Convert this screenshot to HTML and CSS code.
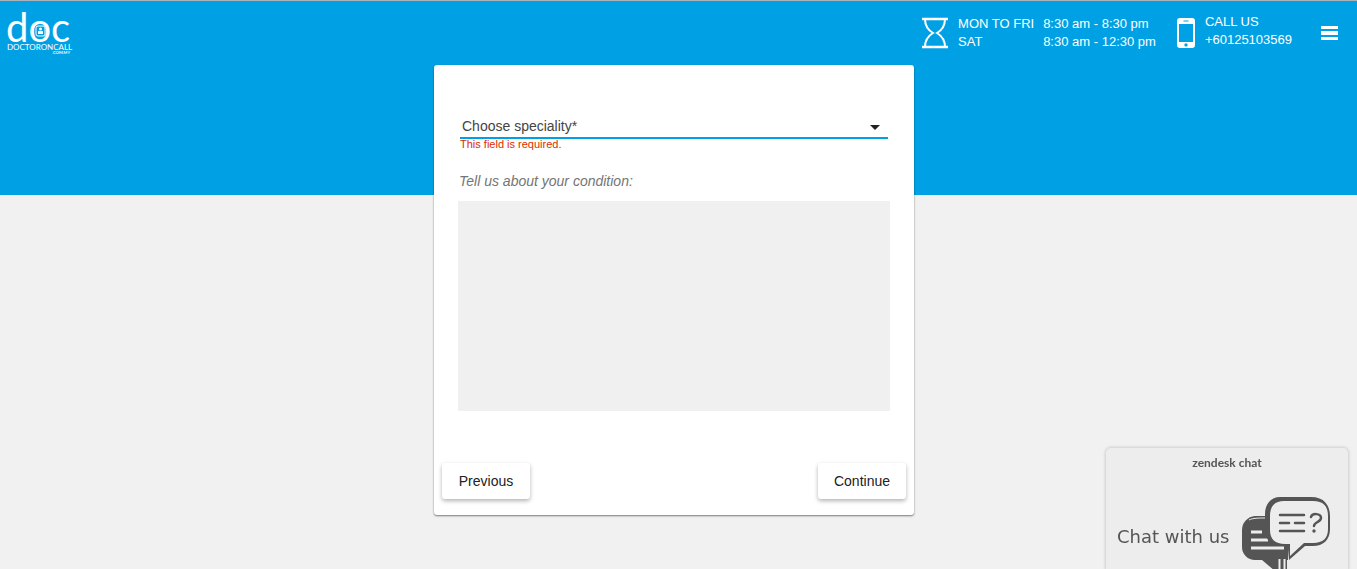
FILE: index.html
```html
<!DOCTYPE html>
<html lang="en">
<head>
    <meta charset="UTF-8">
    <meta name="viewport" content="width=device-width, initial-scale=1.0">
    <title>DoctorOnCall</title>
    <link rel="stylesheet" href="styles.css">
</head>
<body>
    <header class="header">
        <a class="logo" href="#" aria-label="DoctorOnCall home">
            <svg width="72" height="48" viewBox="0 0 72 48" fill="#fff">
                <text class="logo-doc" x="0" y="33">doc</text>
                <rect x="30" y="17" width="9" height="10" rx="2" fill="none" stroke="#fff" stroke-width="1"/>
                <circle cx="34.500" cy="20" r="1.500"/>
                <path d="M32 22h5v3h-5z"/>
                <text class="logo-name" x="1" y="41">DOCTORONCALL</text>
                <text class="logo-domain" x="64" y="45" text-anchor="end">.COM.MY</text>
            </svg>
        </a>
        <div class="header-info">
            <div class="hours">
                <svg width="28" height="32" viewBox="0 0 28 32" fill="none" stroke="#fff" stroke-width="2">
                    <path d="M1 2h26M1 30h26" stroke-width="2.500"/>
                    <path d="M4 2c0 7 3 11 8 14-5 3-8 7-8 14M24 2c0 7-3 11-8 14 5 3 8 7 8 14"/>
                </svg>
                <dl class="hours-list">
                    <dt>MON TO FRI</dt>
                    <dd>8:30 am - 8:30 pm</dd>
                    <dt>SAT</dt>
                    <dd>8:30 am - 12:30 pm</dd>
                </dl>
            </div>
            <div class="call">
                <svg width="18" height="30" viewBox="0 0 18 30">
                    <path fill="#fff" fill-rule="evenodd" d="M3 0h12a3 3 0 0 1 3 3v24a3 3 0 0 1-3 3H3a3 3 0 0 1-3-3V3a3 3 0 0 1 3-3zM2 6v18h14V6zM6.500 2.500v1h5v-1zM9 25.200a1.700 1.700 0 1 0 0 3.400 1.700 1.700 0 0 0 0-3.400z"/>
                </svg>
                <p class="call-text">CALL US<br><a href="tel:+60125103569">+60125103569</a></p>
            </div>
            <button class="menu-btn" type="button" aria-label="Menu">
                <svg width="17" height="14" viewBox="0 0 17 14" fill="#fff">
                    <path d="M0 0h17v3H0zM0 5h17v4H0zM0 11h17v3H0z"/>
                </svg>
            </button>
        </div>
    </header>

    <main class="main">
        <form class="card" action="#" method="post">
            <div class="fields">
                <div class="select-wrap">
                    <select class="speciality" id="speciality" name="speciality" aria-label="Choose speciality" aria-describedby="speciality-error">
                        <option value="">Choose speciality*</option>
                    </select>
                    <svg class="select-arrow" width="10" height="5" viewBox="0 0 10 5"><path d="M0 0h10L5 5z" fill="#212121"/></svg>
                </div>
                <p class="error" id="speciality-error">This field is required.</p>
                <label class="condition-label" for="condition">Tell us about your condition:</label>
                <textarea class="condition" id="condition" name="condition"></textarea>
            </div>
            <div class="actions">
                <button class="btn" type="button">Previous</button>
                <button class="btn" type="submit">Continue</button>
            </div>
        </form>
    </main>

    <aside class="chat">
        <a class="chat-brand" href="#">zendesk chat</a>
        <button class="chat-open" type="button">
            <span class="chat-text">Chat with us</span>
            <svg width="90" height="72" viewBox="0 0 90 72">
                <path fill="#555" d="M14 19h40v44H46v11H34L21 63h-7A13 13 0 0 1 1 50V33a14 14 0 0 1 13-14z"/>
                <path d="M8 23c4-2 9-2 17-2" fill="none" stroke="#ededed" stroke-width="1"/>
                <path fill="#ededed" d="M48 52l14-5v17H47V63z"/>
                <path d="M38.500 62v12M43.500 62v12" fill="none" stroke="#ededed" stroke-width="2"/>
                <path d="M10 35h11M10 43h17M10 51h33" fill="none" stroke="#ededed" stroke-width="3"/>
                <path fill="#555" d="M39 0h31c13 0 19 8 19 19v13c0 11-7 17-17 17h-8L48 63v-14h-7C29 49 24 42 24 32V17C24 7 30 0 39 0z"/>
                <path fill="#ededed" d="M43 4h29c10 0 15 5 15 15v13c0 9-5 14-15 14h-9L49 59V47h-5c-10 0-15-5-15-14V19c0-10 5-15 14-15z"/>
                <path d="M39 18h24M39 26h9M54 26h9M39 34h24" fill="none" stroke="#555" stroke-width="2.500" stroke-linecap="round"/>
                <path d="M70 20c1-4 10-4 10 1 0 4-7 4-7 8" fill="none" stroke="#555" stroke-width="2.500" stroke-linecap="round"/>
                <circle cx="73" cy="34" r="1.700" fill="#555"/>
            </svg>
        </button>
    </aside>
</body>
</html>
```
FILE: styles.css
```css
* {
    box-sizing: border-box;
}
body {
    margin: 0;
    min-height: 100vh;
    font-family: "Liberation Sans", Arial, sans-serif;
    font-size: 14px;
    color: #212121;
    background-color: #f1f1f1;
}
.header {
    display: flex;
    justify-content: space-between;
    align-items: flex-start;
    height: 195px;
    padding: 8px 19px 0 6px;
    background-color: #00a1e4;
    border-top: 1px solid #a9b4ba;
    color: #fff;
}
.logo svg {
    display: block;
    overflow: visible;
}
.logo-doc {
    font-family: Lato, sans-serif;
    font-size: 40px;
}
.logo-name {
    font-family: Lato, sans-serif;
    font-size: 8px;
}
.logo-domain {
    font-family: Lato, sans-serif;
    font-size: 4px;
    font-weight: bold;
}
.header-info {
    display: flex;
    align-items: flex-start;
    gap: 21px;
    font-size: 13px;
    line-height: 18px;
}
.hours,
.call {
    display: flex;
    align-items: center;
    gap: 10px;
}
.hours {
    gap: 9px;
    padding-top: 6px;
}
.call {
    padding-top: 4px;
}
.hours-list {
    display: grid;
    grid-template-columns: auto auto;
    column-gap: 9px;
    margin: 0;
}
.hours-list dd {
    margin: 0;
}
.call-text {
    margin: 0;
}
.call-text a {
    color: inherit;
    text-decoration: none;
}
.call svg {
    margin-top: 4px;
}
.menu-btn {
    display: flex;
    margin: 17px 0 0 8px;
    padding: 0;
    border: none;
    background: none;
    cursor: pointer;
}

/* the card overlaps the blue band */
.main {
    margin-top: -130px;
    padding: 0 9px 24px 0;
}
.card {
    max-width: 480px;
    margin: 0 auto;
    padding: 48px 8px 16px;
    background-color: #fff;
    border-radius: 3px;
    box-shadow: 0 1px 2px rgba(0,0,0,0.5);
}
.fields {
    padding: 0 16px;
}
.select-wrap {
    position: relative;
    margin: 0 2px;
}
.speciality {
    display: block;
    width: 100%;
    height: 26px;
    padding: 2px 2px 0;
    border: none;
    border-bottom: 2px solid #00a1e4;
    border-radius: 0;
    outline: none;
    appearance: none;
    background: none;
    font: inherit;
    color: #444;
}
.select-arrow {
    position: absolute;
    right: 8px;
    top: 12px;
    pointer-events: none;
}
.error {
    margin: 0 2px;
    font-size: 11px;
    line-height: 10px;
    color: #dd2c00;
}
.condition-label {
    display: block;
    padding: 22px 0 10px 1px;
    line-height: 20px;
    font-style: italic;
    color: #757575;
}
.condition {
    display: block;
    width: 100%;
    height: 210px;
    border: none;
    resize: none;
    background-color: #f0f0f0;
    font: inherit;
}
.actions {
    display: flex;
    justify-content: space-between;
    margin-top: 52px;
}
.btn {
    min-width: 88px;
    height: 36px;
    padding: 0 16px;
    border: none;
    border-radius: 3px;
    background-color: #fff;
    box-shadow: 0 2px 4px rgba(0,0,0,0.3);
    font: inherit;
    color: #212121;
    cursor: pointer;
}

.chat {
    position: fixed;
    right: 9px;
    bottom: 0;
    width: 242px;
    padding-top: 8px;
    background-color: #ededed;
    border-radius: 5px 5px 0 0;
    box-shadow: 0 0 3px 1px rgba(0,0,0,0.15);
    color: #555;
}
.chat-brand {
    display: block;
    text-align: center;
    font-family: Lato, sans-serif;
    font-size: 12px;
    line-height: 14px;
    font-weight: bold;
    color: inherit;
    text-decoration: none;
}
.chat-open {
    display: flex;
    justify-content: space-between;
    align-items: center;
    width: 100%;
    padding: 27px 17px 0 11px;
    border: none;
    background: none;
    font-family: "DejaVu Sans", Verdana, sans-serif;
    font-size: 18px;
    color: inherit;
    cursor: pointer;
}
.chat-text {
    padding-top: 6px;
}
```
